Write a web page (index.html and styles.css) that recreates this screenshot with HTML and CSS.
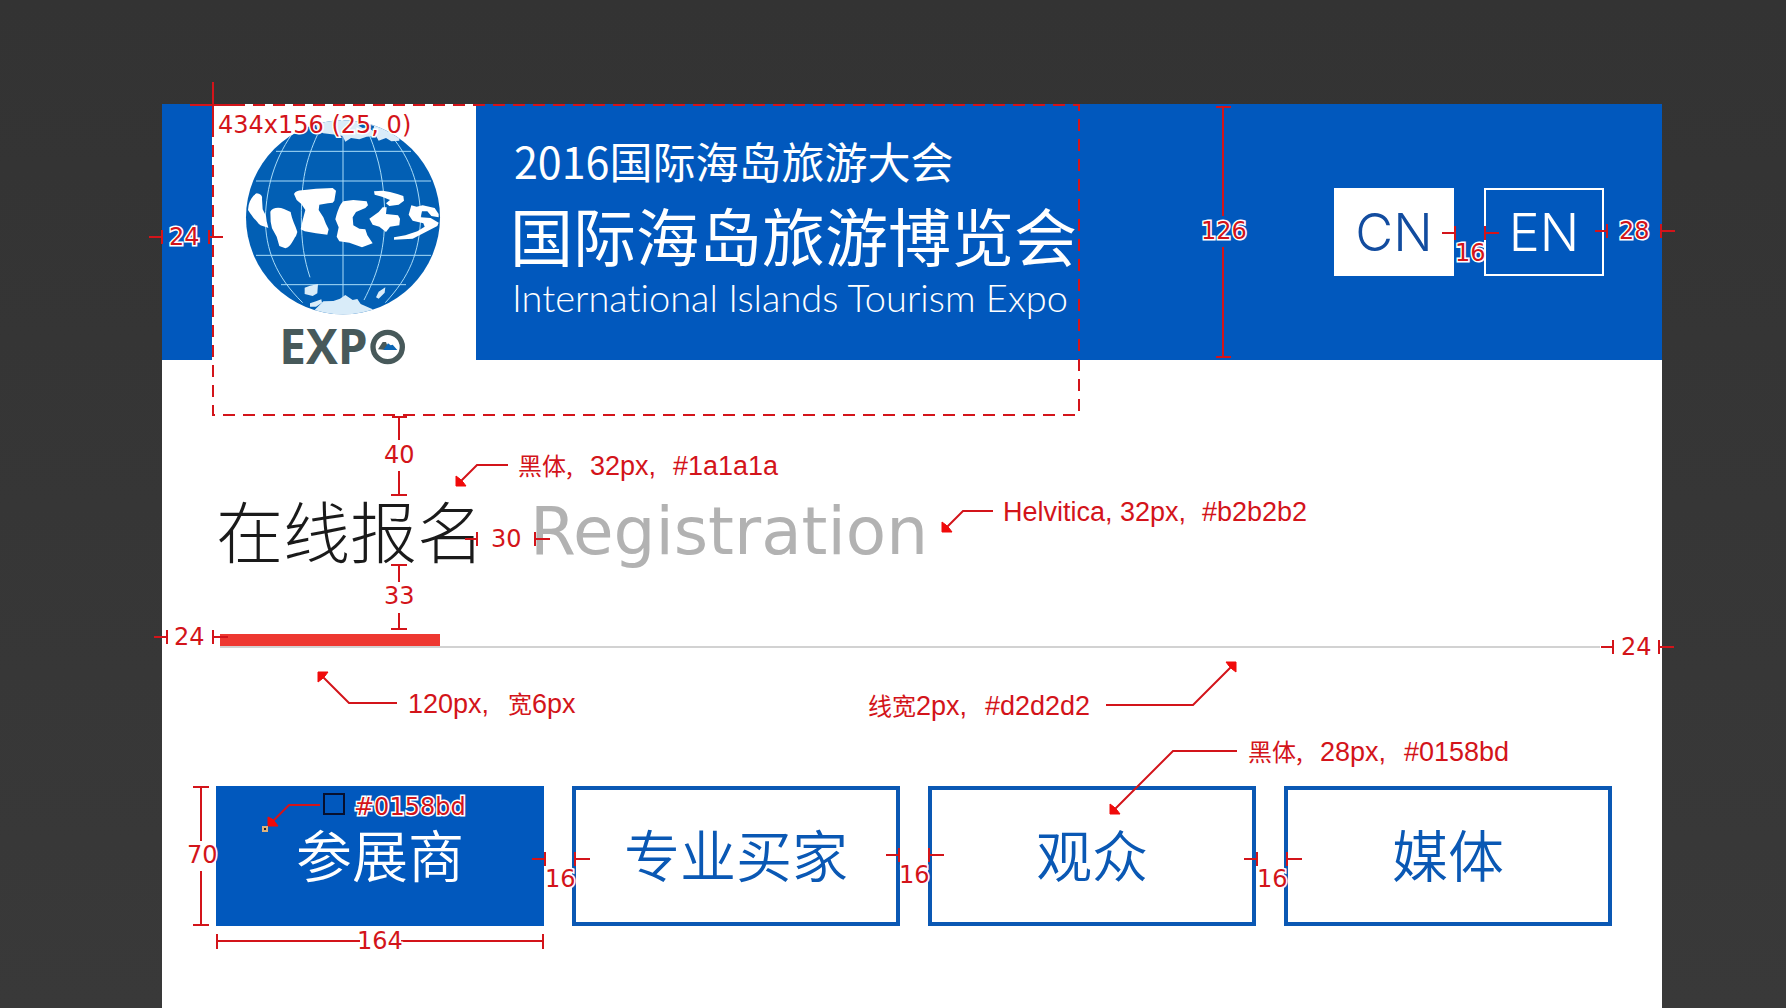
FILE: index.html
```html
<!DOCTYPE html>
<html lang="zh-CN">
<head>
<meta charset="utf-8">
<meta name="viewport" content="width=device-width, initial-scale=1">
<title>在线报名 Registration</title>
<link rel="stylesheet" href="styles.css">
</head>
<body>
<div class="board">
  <div class="sheet">
    <header class="header">
      <svg class="logo" viewBox="-72 -18 792 768" role="img" aria-label="EXPO">
        <defs><clipPath id="disc"><circle cx="321" cy="322" r="291"/></clipPath></defs>
        <circle cx="321" cy="322" r="291" fill="#025fb4"/>
        <g clip-path="url(#disc)">
          <g fill="none" stroke="#a9dcf8" stroke-width="3">
            <path d="M120 124H525M60 213H585M60 436H585M135 524H510M321 30V600"/>
            <path d="M244 75C210 150 196 210 196 322C196 400 205 450 222 502"/>
            <path d="M400 75C430 150 446 220 446 322C446 430 420 500 384 570"/>
            <path d="M166 75C115 150 92 230 88 322C88 420 120 500 200 578"/>
            <path d="M476 90C530 160 552 240 554 322C550 430 520 500 448 578"/>
          </g>
          <path fill="#d9ecf9" d="M235 25L245 62L262 70L300 74L320 78L328 95L345 84L370 88L392 80L420 78L428 92L450 84L466 94L490 92V20Z"/>
          <path fill="#025fb4" d="M362 44L385 40L414 48L412 64L396 52L380 54Z"/>
          <path fill="#d9ecf9" d="M232 604L262 574L292 573L312 566L328 555L350 570L364 567L374 582L410 598V630H225Z"/>
          <path fill="#d9ecf9" d="M206 533L222 527L246 522L244 550L230 558L206 552ZM428 545L448 532L446 548L428 566L420 562Z"/>
          <path fill="#d9ecf9" d="M222 580L240 574L256 568L258 578L240 590L222 590Z"/>
        </g>
        <g fill="#fff">
          <path d="M38 285C42 270 50 256 62 250C74 252 80 258 78 266L80 298L90 318L92 334L97 354C84 348 70 348 64 336C50 322 40 306 36 300Z"/>
          <path d="M103 305C108 293 128 290 144 297L164 306C168 330 178 345 184 366L180 378C170 390 166 410 148 415L130 408L122 380L108 355L104 335Z"/>
          <path d="M174 252C178 244 186 242 198 241L240 236L290 234L300 242L295 272L290 278L276 280L250 284L248 300L262 322L270 342L278 358L274 374L240 370L206 364L194 358L200 330L208 300L196 282L182 270Z"/>
          <path d="M298 328C304 306 310 285 322 274L352 270L392 274L396 286L388 294L360 306L350 322L352 346L370 356L388 358L394 376L410 400L394 406L378 412L340 398L310 394L302 380L308 352Z"/>
          <path d="M414 244L440 242L462 246L484 252L502 258L504 272L488 284L460 288L450 280L462 270L438 260L416 254Z"/>
          <path d="M400 326L428 306L440 292L452 292L450 312L486 316L492 326L490 346L462 350L450 366L430 350L410 344Z"/>
          <path d="M518 314L526 286L542 290L560 286L596 294L608 312V322L586 318L574 304L558 304L554 322L584 324L608 338L604 348L562 370L530 386L474 389V382L508 376L544 364L566 350L562 340L530 332Z"/>
        </g>
        <text class="logo-word" x="130" y="761">EXP</text>
        <circle cx="455" cy="711" r="44" fill="#fff" stroke="#47595a" stroke-width="16"/>
        <path fill="#47595a" d="M426 718L440 696L450 696L456 712L450 720Z"/>
        <path fill="#0b66b5" d="M442 720L456 700L464 706L470 704L484 720Z"/>
      </svg>
      <div class="titles">
        <p class="congress">2016国际海岛旅游大会</p>
        <p class="expo">国际海岛旅游博览会</p>
        <p class="expo-en">International Islands Tourism Expo</p>
      </div>
      <nav class="languages" aria-label="Language">
        <button class="language language-current" type="button">CN</button>
        <button class="language" type="button">EN</button>
      </nav>
    </header>
    <main class="content">
      <h1 class="heading"><span class="heading-cn">在线报名</span><span class="heading-en">Registration</span></h1>
      <div class="rule"><div class="rule-accent"></div></div>
      <div class="roles">
        <button class="role role-current" type="button">参展商</button>
        <button class="role" type="button">专业买家</button>
        <button class="role" type="button">观众</button>
        <button class="role" type="button">媒体</button>
      </div>
    </main>
  </div>

  <svg class="notes">
    <!-- logo area outline and origin -->
    <path class="dashed" d="M213 105H1079V415H213Z"/>
    <path class="line" d="M213 82V133M190 105H242"/>
    <text class="size" x="218" y="133">434x156 (25, 0)</text>

    <!-- header spacing -->
    <path class="line" d="M149 237H162M162 230V244M209 230V244M209 237H223"/>
    <text class="size" x="169" y="245">24</text>
    <path class="line" d="M1216 107H1231M1223 107V216M1223 247V357M1216 357H1231"/>
    <text class="size" x="1201" y="239">126</text>
    <path class="line" d="M1442 233H1455M1455 226V240M1485 226V240M1485 233H1499"/>
    <text class="size" x="1455" y="261">16</text>
    <path class="line" d="M1595 231H1607M1607 224V238M1661 224V238M1661 231H1675"/>
    <text class="size" x="1619" y="239">28</text>

    <!-- heading spacing -->
    <path class="line" d="M392 417H407M399 417V440M399 471V495M391 495H407"/>
    <text class="size" x="384" y="463">40</text>
    <path class="line" d="M465 539H477M477 532V546M535 532V546M535 539H550"/>
    <text class="size" x="491" y="547">30</text>
    <path class="line" d="M391 565H407M399 565V582M399 613V629M391 629H407"/>
    <text class="size" x="384" y="604">33</text>
    <path class="line" d="M154 637H167M167 630V644M213 630V644M213 637H228"/>
    <text class="size" x="174" y="645">24</text>
    <path class="line" d="M1601 647H1613M1613 640V654M1659 640V654M1659 647H1674"/>
    <text class="size" x="1621" y="655">24</text>

    <!-- button sizes and gaps -->
    <path class="line" d="M193 787H209M201 787V841M201 871V925M193 925H209"/>
    <text class="size" x="187" y="863">70</text>
    <path class="line" d="M217 934V949M217 941H360M401 941H543M543 934V949"/>
    <text class="size" x="357" y="949">164</text>
    <path class="line" d="M532 859H545M545 852V866M575 852V866M575 859H590"/>
    <text class="size" x="545" y="887">16</text>
    <path class="line" d="M886 855H899M899 848V862M929 848V862M929 855H944"/>
    <text class="size" x="899" y="883">16</text>
    <path class="line" d="M1244 859H1257M1257 852V866M1287 852V866M1287 859H1302"/>
    <text class="size" x="1257" y="887">16</text>

    <!-- leaders -->
    <path class="line" d="M508 465H477L458 484M993 511H963L944 530M397 703H349L320 674M1106 705H1193L1234 664M1237 751H1173L1112 812M320 805H289L270 824"/>
    <path class="head" d="M456 476V486H466L463 482L460 479ZM942 522V532H952L949 528L946 525ZM328 672H318V682L322 679L325 676ZM1226 662H1236V672L1232 669L1229 666ZM1110 804V814H1120L1117 810L1114 807ZM268 817V826H278L275 822L272 819Z"/>

    <!-- style labels -->
    <text class="label"><tspan x="518" y="475">黑体,</tspan><tspan class="latin" x="590">32px,</tspan><tspan class="latin" x="673">#1a1a1a</tspan></text>
    <text class="label"><tspan class="latin" x="1003" y="521">Helvitica, 32px,</tspan><tspan class="latin" x="1202">#b2b2b2</tspan></text>
    <text class="label"><tspan class="latin" x="408" y="713">120px,</tspan><tspan x="508">宽</tspan><tspan class="latin">6px</tspan></text>
    <text class="label"><tspan x="868" y="715">线宽</tspan><tspan class="latin">2px,</tspan><tspan class="latin" x="985">#d2d2d2</tspan></text>
    <text class="label"><tspan x="1248" y="761">黑体,</tspan><tspan class="latin" x="1320">28px,</tspan><tspan class="latin" x="1404">#0158bd</tspan></text>

    <!-- colour sample -->
    <rect class="swatch" x="324" y="794" width="20" height="20"/>
    <rect class="probe" x="263" y="827" width="4" height="4"/>
    <text class="size" x="354" y="815">#0158bd</text>
  </svg>
</div>
</body>
</html>
```
FILE: styles.css
```css
* {
  box-sizing: border-box;
}

body {
  margin: 0;
  background: #373737;
  font-family: "Noto Sans CJK SC", sans-serif;
}

h1,
p {
  margin: 0;
}

.board {
  position: relative;
  display: flex;
  min-height: 100vh;
  padding: 104px 124px 0 162px;
  background: linear-gradient(#333, #393939);
}

.sheet {
  flex: 1;
  min-width: 0;
  background: #fff;
}

.header {
  display: flex;
  align-items: center;
  padding: 0 58px 0 50px;
  background: #0158bd;
}

.logo {
  flex: none;
  width: 264px;
  height: 256px;
  background: #fff;
  overflow: visible;
}

.logo-word {
  font: 700 143px "Open Sans", sans-serif;
  fill: #47595a;
}

.titles {
  flex: 1;
  padding: 0 0 18px 34px;
  color: #fff;
  white-space: nowrap;
}

.congress {
  padding-left: 4px;
  font-size: 43px;
  line-height: 64px;
}

.expo {
  font-size: 63px;
  line-height: 84px;
}

.expo-en {
  padding-left: 2px;
  font-family: Lato, sans-serif;
  font-size: 38px;
  font-weight: 300;
  font-variant-ligatures: none;
  line-height: 42px;
}

.languages {
  display: flex;
  gap: 30px;
}

.language {
  width: 120px;
  height: 88px;
  padding: 0;
  border: 2px solid #fff;
  background: none;
  color: #fff;
  font: 300 52px Inter, sans-serif;
}

.language-current {
  background: #fff;
  color: #124c9f;
}

.content {
  padding: 128px 50px 82px 54px;
}

.heading {
  display: flex;
  align-items: center;
  gap: 46px;
  height: 80px;
  white-space: nowrap;
}

.heading-cn {
  color: #1a1a1a;
  font-size: 67px;
  font-weight: 300;
}

.heading-en {
  padding-top: 6px;
  color: #b2b2b2;
  font-family: "DejaVu Sans", sans-serif;
  font-size: 66px;
  font-weight: 400;
}

.rule {
  margin: 66px 12px 138px 4px;
  border-bottom: 2px solid #d2d2d2;
}

.rule-accent {
  width: 220px;
  height: 12px;
  background: #ee3831;
}

.roles {
  display: grid;
  grid-template-columns: repeat(4, 1fr);
  gap: 28px;
}

.role {
  height: 140px;
  padding: 0 0 8px;
  border: 4px solid #0a58b4;
  background: #fff;
  color: #0a58b4;
  font: 350 56px "Noto Sans CJK SC", sans-serif;
}

.role-current {
  border-color: #0158bd;
  background: #0158bd;
  color: #fff;
}

.notes {
  position: absolute;
  top: 0;
  left: 0;
  width: 100%;
  height: 100%;
  pointer-events: none;
}

.line,
.dashed {
  fill: none;
  stroke: #d3141a;
  stroke-width: 2;
}

.dashed {
  stroke-dasharray: 12 8;
}

.head {
  fill: #f00a0a;
  stroke: #f00a0a;
}

.size {
  fill: #d3141a;
  stroke: #fff;
  stroke-width: 3;
  paint-order: stroke;
  font: 24px "DejaVu Sans", sans-serif;
}

.label {
  fill: #d3141a;
  font: 24px "Noto Sans CJK SC", sans-serif;
}

.latin {
  font: 27px "Liberation Sans", sans-serif;
}

.swatch {
  fill: none;
  stroke: #07102e;
  stroke-width: 2;
}

.probe {
  fill: #222;
  stroke: #dfb27c;
  stroke-width: 2;
}
```
